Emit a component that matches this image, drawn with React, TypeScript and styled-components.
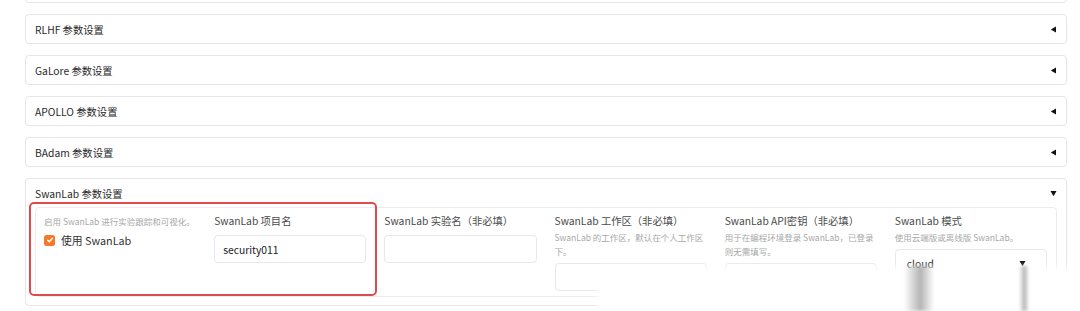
import React from "react";
import styled, { createGlobalStyle } from "styled-components";

const GlobalStyle = createGlobalStyle`
  html, body { margin: 0; padding: 0; background: #fff; }
  body {
    font-family: "Noto Sans CJK SC", "Noto Sans", sans-serif;
    -webkit-font-smoothing: antialiased;
  }
  * { box-sizing: border-box; }
`;

const Page = styled.div`
  position: relative;
  width: 1080px;
  height: 311px;
  overflow: hidden;
  background: #fff;
`;

const Stack = styled.div`
  display: flex;
  flex-direction: column;
  gap: 11px;
  margin-top: -27px;
  padding: 0 13px 0 25px;
`;

const Accordion = styled.section`
  position: relative;
  border: 1px solid #e6e6e9;
  border-radius: 4px;
  background: #fff;
`;

const Header = styled.div`
  height: 28px;
  display: flex;
  align-items: center;
  justify-content: space-between;
  padding: 0 9px 0 9px;
  font-size: 10.3px;
  color: #2a2a2a;
`;

const Body = styled.div`
  padding: 0 9px 8px 9px;
`;

const FormRow = styled.div`
  display: grid;
  grid-template-columns: repeat(6, minmax(0, 1fr));
  column-gap: 18px;
  height: 90px;
  padding: 6px 9px 0 8px;
  border: 1px solid #ececef;
  border-radius: 4px;
`;

const Field = styled.div`
  display: flex;
  flex-direction: column;
  min-width: 0;
`;

const Label = styled.div`
  font-size: 10.3px;
  line-height: 14px;
  color: #4a4a4a;
  margin-bottom: 2px;
  white-space: nowrap;
`;

const Info = styled.div`
  font-size: 8.5px;
  line-height: 14px;
  color: #a8a8a8;
`;

const TextBox = styled.div<{ $select?: boolean }>`
  margin-top: 5px;
  height: 28px;
  display: flex;
  align-items: center;
  justify-content: space-between;
  padding: 0 ${(p) => (p.$select ? "20px" : "9px")} 0
    ${(p) => (p.$select ? "11px" : "8px")};
  border: 1px solid #e8e8eb;
  border-radius: 4px;
  background: #fff;
  font-size: 10.3px;
  color: #222;
`;

const CheckRow = styled.label`
  margin-top: 5px;
  height: 14px;
  display: flex;
  align-items: center;
  gap: 6px;
  font-size: 10.8px;
  color: #333;
`;

const CheckBox = styled.span`
  width: 11px;
  height: 11px;
  border-radius: 2.5px;
  background: #f5792a;
  display: inline-flex;
  align-items: center;
  justify-content: center;
`;

const Highlight = styled.div`
  position: absolute;
  left: 3px;
  top: 23px;
  width: 348px;
  height: 94px;
  border: 2px solid #e04a4d;
  border-radius: 5px;
  pointer-events: none;
`;

const Fade = styled.div`
  position: absolute;
  left: 597px;
  top: 267px;
  right: -12px;
  bottom: -12px;
  background: #fff;
  filter: blur(3px);
`;

const Streak = styled.div<{ $left: number; $width: number }>`
  position: absolute;
  top: 266px;
  bottom: 0;
  left: ${(p) => p.$left}px;
  width: ${(p) => p.$width}px;
  background: linear-gradient(
    to right,
    rgba(150, 150, 150, 0) 0%,
    rgba(130, 130, 130, 0.6) 55%,
    rgba(150, 150, 150, 0) 100%
  );
  filter: blur(1.5px);
`;

const Caret = ({ open }: { open?: boolean }) =>
  open ? (
    <svg width="7" height="7" viewBox="0 0 7 7">
      <polygon points="0.5,1 6.5,1 3.5,6.2" fill="#111" />
    </svg>
  ) : (
    <svg width="7" height="7" viewBox="0 0 7 7">
      <polygon points="6,0.6 6,6.4 0.8,3.5" fill="#111" />
    </svg>
  );

const Check = () => (
  <svg width="8" height="8" viewBox="0 0 8 8">
    <polyline
      points="1.6,4.2 3.3,5.8 6.4,2.3"
      fill="none"
      stroke="#fff"
      strokeWidth="1.4"
      strokeLinecap="round"
      strokeLinejoin="round"
    />
  </svg>
);

const closed = ["", "RLHF 参数设置", "GaLore 参数设置", "APOLLO 参数设置", "BAdam 参数设置"];

export default function App() {
  return (
    <Page>
      <GlobalStyle />
      <Stack>
        {closed.map((t, i) => (
          <Accordion key={i}>
            <Header>
              <span>{t}</span>
              <Caret />
            </Header>
          </Accordion>
        ))}
        <Accordion>
          <Header>
            <span>SwanLab 参数设置</span>
            <Caret open />
          </Header>
          <Body>
            <FormRow>
              <Field>
                <Info>启用 SwanLab 进行实验跟踪和可视化。</Info>
                <CheckRow>
                  <CheckBox>
                    <Check />
                  </CheckBox>
                  使用 SwanLab
                </CheckRow>
              </Field>
              <Field>
                <Label>SwanLab 项目名</Label>
                <TextBox>security011</TextBox>
              </Field>
              <Field>
                <Label>SwanLab 实验名（非必填）</Label>
                <TextBox />
              </Field>
              <Field>
                <Label>SwanLab 工作区（非必填）</Label>
                <Info>SwanLab 的工作区，默认在个人工作区下。</Info>
                <TextBox />
              </Field>
              <Field>
                <Label>SwanLab API密钥（非必填）</Label>
                <Info>用于在编程环境登录 SwanLab，已登录则无需填写。</Info>
                <TextBox />
              </Field>
              <Field>
                <Label>SwanLab 模式</Label>
                <Info>使用云端版或离线版 SwanLab。</Info>
                <TextBox $select>
                  <span>cloud</span>
                  <Caret open />
                </TextBox>
              </Field>
            </FormRow>
          </Body>
          <Highlight />
        </Accordion>
      </Stack>
      <Fade />
      <Streak $left={904} $width={30} />
      <Streak $left={1019} $width={10} />
    </Page>
  );
}
